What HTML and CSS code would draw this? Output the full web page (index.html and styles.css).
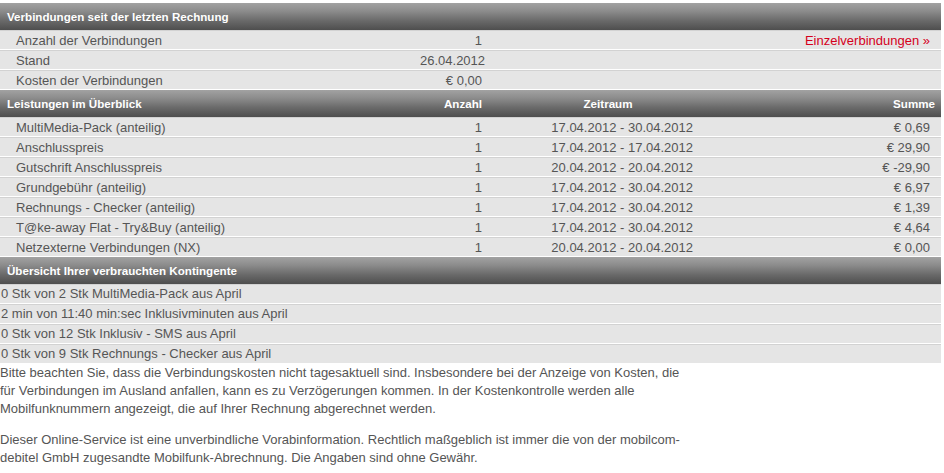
FILE: index.html
```html
<!DOCTYPE html>
<html lang="de">
<head>
<meta charset="utf-8">
<link rel="stylesheet" href="styles.css">
</head>
<body>
<div class="page">
  <div class="head"><span class="h-name">Verbindungen seit der letzten Rechnung</span></div>
  <div class="row"><span class="name">Anzahl der Verbindungen</span><span class="num">1</span><span></span><span class="link">Einzelverbindungen »</span></div>
  <div class="row"><span class="name">Stand</span><span class="num wide">26.04.2012</span><span></span><span></span></div>
  <div class="row"><span class="name">Kosten der Verbindungen</span><span class="num wide">€ 0,00</span><span></span><span></span></div>

  <div class="head"><span class="h-name">Leistungen im Überblick</span><span class="h-num">Anzahl</span><span class="h-zeit">Zeitraum</span><span class="h-sum">Summe</span></div>
  <div class="row"><span class="name">MultiMedia-Pack (anteilig)</span><span class="num">1</span><span class="zeit">17.04.2012 - 30.04.2012</span><span class="sum">€ 0,69</span></div>
  <div class="row"><span class="name">Anschlusspreis</span><span class="num">1</span><span class="zeit">17.04.2012 - 17.04.2012</span><span class="sum">€ 29,90</span></div>
  <div class="row"><span class="name">Gutschrift Anschlusspreis</span><span class="num">1</span><span class="zeit">20.04.2012 - 20.04.2012</span><span class="sum">€ -29,90</span></div>
  <div class="row"><span class="name">Grundgebühr (anteilig)</span><span class="num">1</span><span class="zeit">17.04.2012 - 30.04.2012</span><span class="sum">€ 6,97</span></div>
  <div class="row"><span class="name">Rechnungs - Checker (anteilig)</span><span class="num">1</span><span class="zeit">17.04.2012 - 30.04.2012</span><span class="sum">€ 1,39</span></div>
  <div class="row"><span class="name">T@ke-away Flat - Try&amp;Buy (anteilig)</span><span class="num">1</span><span class="zeit">17.04.2012 - 30.04.2012</span><span class="sum">€ 4,64</span></div>
  <div class="row"><span class="name">Netzexterne Verbindungen (NX)</span><span class="num">1</span><span class="zeit">20.04.2012 - 20.04.2012</span><span class="sum">€ 0,00</span></div>

  <div class="head"><span class="h-name">Übersicht Ihrer verbrauchten Kontingente</span></div>
  <div class="line">0 Stk von 2 Stk MultiMedia-Pack aus April</div>
  <div class="line">2 min von 11:40 min:sec Inklusivminuten aus April</div>
  <div class="line">0 Stk von 12 Stk Inklusiv - SMS aus April</div>
  <div class="line">0 Stk von 9 Stk Rechnungs - Checker aus April</div>

  <p class="note">Bitte beachten Sie, dass die Verbindungskosten nicht tagesaktuell sind. Insbesondere bei der Anzeige von Kosten, die für Verbindungen im Ausland anfallen, kann es zu Verzögerungen kommen. In der Kostenkontrolle werden alle Mobilfunknummern angezeigt, die auf Ihrer Rechnung abgerechnet werden.</p>
  <p class="note">Dieser Online-Service ist eine unverbindliche Vorabinformation. Rechtlich maßgeblich ist immer die von der mobilcom-debitel GmbH zugesandte Mobilfunk-Abrechnung. Die Angaben sind ohne Gewähr.</p>
</div>
</body>
</html>
```
FILE: styles.css
```css
html, body {
  margin: 0;
  padding: 0;
  background: #fff;
}
body {
  font-family: "Liberation Sans", Arial, sans-serif;
  font-size: 13px;
  color: #555;
}
.page {
  width: 941px;
  padding-top: 3px;
}
.head, .row {
  display: grid;
  grid-template-columns: 420px 67px 211px 1fr;
  align-items: center;
}
.head {
  height: 27px;
  background: linear-gradient(to bottom, #a2a2a2 0%, #8c8c8c 30%, #6a6a6a 65%, #4e4e4e 100%);
  color: #fff;
  font-weight: bold;
  font-size: 11.6px;
}
.h-name {
  padding-left: 7px;
  white-space: nowrap;
  grid-column: 1 / 2;
}
.h-num {
  text-align: right;
  padding-right: 5px;
}
.h-zeit {
  text-align: center;
  padding-left: 31px;
}
.h-sum {
  text-align: right;
  padding-right: 6px;
}
.row {
  height: 20px;
  box-sizing: border-box;
  background: #e5e5e5;
  border-bottom: 1px solid #fff;
  border-top: 1px solid #d2d2d2;
}
.row .name {
  padding-left: 16px;
  white-space: nowrap;
}
.row .num {
  text-align: right;
  padding-right: 5px;
  white-space: nowrap;
}
.row .zeit {
  text-align: right;
  padding-right: 5px;
  white-space: nowrap;
}
.row .sum, .row .link {
  text-align: right;
  padding-right: 11px;
  white-space: nowrap;
}
.row .link {
  color: #d5001c;
}
.line {
  height: 20px;
  line-height: 18px;
  box-sizing: border-box;
  background: #e5e5e5;
  border-top: 1px solid #d2d2d2;
  border-bottom: 1px solid #fff;
  padding-left: 1px;
  white-space: nowrap;
}
.note {
  width: 688px;
  margin: 0 0 13px 0;
  line-height: 18px;
}
```
